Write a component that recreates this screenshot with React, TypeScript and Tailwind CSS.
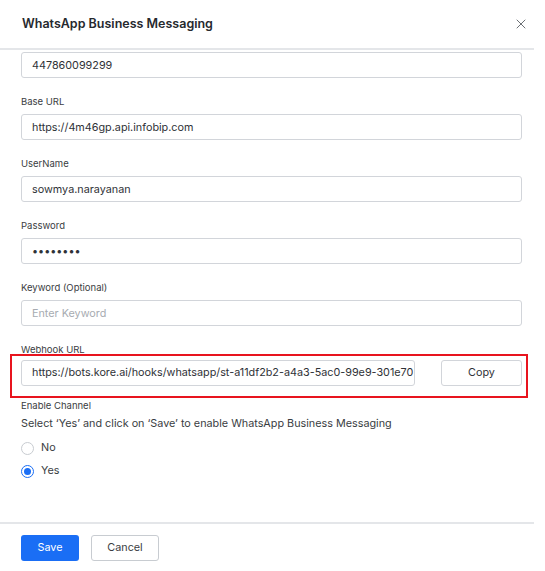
import { X } from 'lucide-react';

const font = { fontFamily: 'Inter, "Noto Sans", sans-serif' };

function Field({ label, value, placeholder, type = 'text' }: { label: string; value?: string; placeholder?: string; type?: string }) {
    return (
        <div className="mt-[17px]">
            <label className="block text-[9.5px] leading-[14px] text-[#3a3d42]">{label}</label>
            <input
                readOnly
                type={type}
                value={value ?? ''}
                placeholder={placeholder}
                className="mt-[5px] w-full h-[26px] rounded-[3px] border border-[#d2d5da] px-[10px] text-[10.8px] text-[#2f3237] placeholder:text-[#a7abb1] outline-none"
            />
        </div>
    );
}

function Radio({ label, checked }: { label: string; checked?: boolean }) {
    return (
        <label className="flex items-center gap-[7px] h-[23px]">
            <span
                className={`w-[13px] h-[13px] rounded-full border flex items-center justify-center ${checked ? 'border-[#1a6ef5]' : 'border-[#c8ccd1]'}`}
            >
                {checked && <span className="w-[7px] h-[7px] rounded-full bg-[#1a6ef5]" />}
            </span>
            <span className="text-[10.8px] text-[#3a3d42]">{label}</span>
        </label>
    );
}

export default function App() {
    return (
        <div className="w-[545px] h-[571px] bg-white overflow-hidden" style={font}>
            <div className="w-[534px] h-[571px] flex flex-col">
                <div className="h-[48px] flex items-center justify-between pl-[22px] pr-[5px] shrink-0">
                    <h1 className="text-[12.5px] font-semibold text-[#26292e]">WhatsApp Business Messaging</h1>
                    <X className="w-[16px] h-[16px] text-[#55595f]" strokeWidth={1.3} />
                </div>
                <div className="h-[2px] bg-[#e4e6e9] shrink-0" />

                <div className="flex-1 pl-[21px] pr-[12px] overflow-hidden">
                    <input
                        readOnly
                        value="447860099299"
                        className="mt-[2px] w-full h-[26px] rounded-[3px] border border-[#d2d5da] px-[10px] text-[10.8px] text-[#2f3237] outline-none"
                    />
                    <Field label="Base URL" value="https://4m46gp.api.infobip.com" />
                    <Field label="UserName" value="sowmya.narayanan" />
                    <Field label="Password" value="sowmya12" type="password" />
                    <Field label="Keyword (Optional)" placeholder="Enter Keyword" />

                    <div className="mt-[17px]">
                        <label className="block text-[9.5px] leading-[14px] text-[#3a3d42]">Webhook URL</label>
                        <div className="-mt-[3px] -ml-[11px] -mr-[6px] border-2 border-[#e8141e] pl-[9px] pr-[4px] pt-[4px] pb-[10px] flex gap-[26px]">
                            <div className="w-[394px] h-[26px] rounded-[3px] border border-[#d2d5da] pl-[10px] pr-[4px] flex items-center text-[10.8px] text-[#2f3237] overflow-hidden whitespace-nowrap">
                                https://bots.kore.ai/hooks/whatsapp/st-a11df2b2-a4a3-5ac0-99e9-301e70
                            </div>
                            <button className="flex-1 h-[26px] rounded-[3px] border border-[#d2d5da] text-[10.8px] text-[#2f3237] bg-white">
                                Copy
                            </button>
                        </div>
                    </div>

                    <div className="mt-[1px] text-[9.5px] leading-[14px] text-[#3a3d42]">Enable Channel</div>
                    <p className="mt-[3px] text-[10.8px] leading-[16px] text-[#3a3d42]">
                        Select ‘Yes’ and click on ‘Save’ to enable WhatsApp Business Messaging
                    </p>
                    <div className="mt-[5px] flex flex-col">
                        <Radio label="No" />
                        <Radio label="Yes" checked />
                    </div>
                </div>

                <div className="h-[2px] bg-[#e4e6e9] shrink-0" />
                <div className="h-[47px] shrink-0 flex items-start pt-[11px] gap-[12px] px-[21px]">
                    <button className="w-[58px] h-[26px] rounded-[3px] bg-[#1a6ef5] text-white text-[10.8px]">Save</button>
                    <button className="w-[68px] h-[26px] rounded-[3px] border border-[#c8ccd1] text-[#3a3d42] text-[10.8px] bg-white">Cancel</button>
                </div>
            </div>
        </div>
    );
}
